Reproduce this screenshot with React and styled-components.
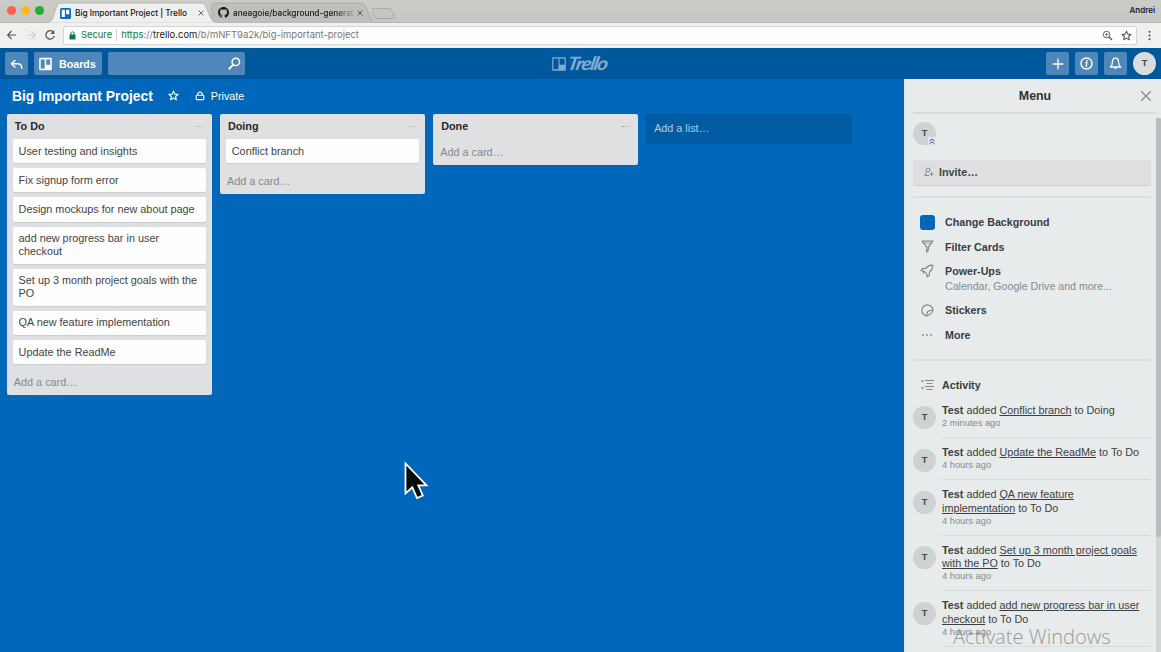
import React from "react";
import styled, { createGlobalStyle, css } from "styled-components";

const Global = createGlobalStyle`
  * { box-sizing: border-box; }
  body { margin: 0; overflow: hidden; background: #0067ba; }
`;

const sans = `"Liberation Sans", Arial, sans-serif`;
const system = `Inter, Roboto, sans-serif`;

const Page = styled.div`
  width: 1161px;
  height: 652px;
  display: flex;
  flex-direction: column;
  overflow: hidden;
  background: #0067ba;
  font-family: ${sans};
  color: #3f4243;
`;

/* ---------- browser frame ---------- */

const TabStrip = styled.div`
  height: 23px;
  flex: none;
  display: flex;
  align-items: flex-start;
  background: linear-gradient(#cbcbc7, #c6c6c3);
  border-bottom: 1px solid #b3b3b0;
  font-family: ${system};
  position: relative;
`;

const Lights = styled.div`
  display: flex;
  gap: 5px;
  padding: 6px 0 0 7px;
  width: 49px;
`;

const Light = styled.i`
  width: 9px;
  height: 9px;
  border-radius: 50%;
  background: ${(p) => p.$color};
`;

const Tab = styled.div`
  position: relative;
  z-index: ${(p) => (p.$active ? 2 : 1)};
  width: ${(p) => p.$width}px;
  height: ${(p) => (p.$active ? 21 : 20)}px;
  margin: 2px ${(p) => (p.$active ? -6 : 0)}px 0 0;
  display: flex;
  align-items: center;
  padding: ${(p) => (p.$active ? "1px 12px 0 11px" : "1px 9px 0 8px")};
  color: #151515;
`;

const TabShape = styled.svg`
  position: absolute;
  inset: 0;
  z-index: -1;
`;

const TabIcon = styled.svg`
  flex: none;
  margin-right: 4px;
`;

const TabTitle = styled.span`
  font-size: 8.3px;
  line-height: 14px;
  font-weight: 500;
  letter-spacing: -0.03px;
  white-space: nowrap;
  ${(p) => p.$fade && css`mask-image: linear-gradient(90deg, #000 84%, rgba(0, 0, 0, 0.15));`}
`;

const TabClose = styled.svg`
  margin-left: auto;
  flex: none;
`;

const Profile = styled.span`
  margin: 4px 6px 0 auto;
  font-size: 8px;
  line-height: 13px;
  font-weight: 600;
  color: #1d1d1d;
`;

const Toolbar = styled.div`
  height: 25px;
  flex: none;
  display: flex;
  align-items: center;
  background: #f0f0ef;
  padding: 0 7px 1px 6px;
  font-family: ${system};
`;

const NavIcons = styled.div`
  display: flex;
  gap: 7px;
  width: 57px;
`;

const Address = styled.div`
  flex: 1;
  height: 19px;
  display: flex;
  align-items: center;
  background: #fefefe;
  border: 1px solid #d4d4d4;
  border-radius: 2px;
  padding: 0 4px 0 5px;
  margin-right: 8px;
`;

const Secure = styled.span`
  margin-left: 5px;
  padding-right: 4px;
  font-size: 9.45px;
  line-height: 12px;
  color: #0b7a3c;
  border-right: 1px solid #d0d0d0;
  letter-spacing: -0.05px;
`;

const Url = styled.span`
  flex: 1;
  margin-left: 4px;
  font-size: 9.46px;
  line-height: 12px;
  color: #767676;
  white-space: nowrap;
  b { font-weight: 400; color: #0b7a3c; }
  em { font-style: normal; color: #1b1b1b; }
`;

const AddressIcons = styled.div`
  display: flex;
  gap: 8px;
`;

/* ---------- application header ---------- */

const Header = styled.header`
  height: 31px;
  flex: none;
  display: grid;
  grid-template-columns: 1fr 58px 1fr;
  align-items: center;
  background: #00589c;
  padding: 0 5px;
`;

const HeaderGroup = styled.div`
  display: flex;
  align-items: center;
  gap: 6px;
  justify-content: ${(p) => (p.$end ? "flex-end" : "flex-start")};
`;

const HeaderButton = styled.button`
  width: ${(p) => p.$width || 23}px;
  height: 23px;
  border: 0;
  border-radius: 2px;
  padding: 0;
  background: #4f87ba;
  color: #fff;
  display: flex;
  align-items: center;
  justify-content: ${(p) => p.$justify || "center"};
  font: bold 10.7px/14px ${sans};
`;

const BoardsLabel = styled.span`
  margin-left: 7px;
`;

const Search = styled(HeaderButton).attrs({ as: "div" })`
  justify-content: flex-end;
  padding-right: 4px;
`;

const Logo = styled.div`
  display: flex;
  align-items: center;
  gap: 2px;
  color: #84abd0;
`;

const LogoWord = styled.span`
  font: italic 700 18.5px/20px Lato, ${sans};
  letter-spacing: -1.3px;
  transform: translateY(-1px) scaleX(1.12) skewX(-10deg);
  transform-origin: left center;
`;

const Avatar = styled.span`
  flex: none;
  width: 23px;
  height: 23px;
  border-radius: 50%;
  background: ${(p) => (p.$light ? "#dadcde" : "#cfd2d3")};
  color: #45494b;
  font: bold 9.2px/23px ${sans};
  text-align: center;
  position: relative;
`;

/* ---------- board ---------- */

const Body = styled.main`
  flex: 1;
  min-height: 0;
  display: flex;
`;

const Board = styled.section`
  flex: 1;
  padding: 0 0 0 6.6px;
`;

const BoardHeader = styled.div`
  height: 35px;
  display: flex;
  align-items: center;
  padding: 0 0 1.5px 5.4px;
  color: #fff;
`;

const BoardTitle = styled.h1`
  margin: 0 15px 0 0;
  font-size: 13.85px;
  line-height: 18px;
`;

const Privacy = styled.span`
  display: flex;
  align-items: center;
  gap: 6px;
  margin-left: 16px;
  font-size: 10.8px;
`;

const Lists = styled.div`
  display: flex;
  align-items: flex-start;
  gap: 7.7px;
`;

const List = styled.section`
  width: 205.5px;
  background: #dfe0e2;
  border-radius: 2px;
  padding: 0 6px;
`;

const ListHeader = styled.div`
  height: 25.3px;
  display: flex;
  align-items: center;
  justify-content: space-between;
  padding: 0 3px 0.4px 2.2px;
  h2 {
    margin: 0;
    font-size: 10.8px;
    line-height: 14px;
    color: #28292a;
  }
`;

const Dots = styled.span`
  display: flex;
  gap: ${(p) => p.$gap || 1.4}px;
  i {
    width: ${(p) => p.$size || 1.6}px;
    height: ${(p) => p.$size || 1.6}px;
    border-radius: 50%;
    background: #8d9194;
  }
`;

const Card = styled.div`
  margin-bottom: 5px;
  padding: 5.4px 5px 5.5px 6px;
  background: #fefefe;
  border-radius: 2px;
  box-shadow: 0 1px 1px #c9cbcd;
  font-size: 10.85px;
  line-height: 13.18px;
  color: #444;
`;

const AddCard = styled.div`
  height: 25.6px;
  padding-left: 1.2px;
  font-size: 10.85px;
  line-height: 27px;
  color: #84898c;
`;

const AddList = styled.div`
  width: 205.5px;
  height: 29.5px;
  border-radius: 2px;
  background: #005ba3;
  padding-left: 8px;
  font-size: 10.8px;
  line-height: 29.5px;
  color: #b4cce3;
`;

/* ---------- menu ---------- */

const Menu = styled.aside`
  width: 257px;
  background: #e8ebec;
  border-left: 1px solid #dfe5ea;
  padding-left: 8px;
`;

const MenuHeader = styled.div`
  height: 35px;
  display: flex;
  align-items: center;
  border-bottom: 2px solid #d9dbdd;
  margin-right: 4px;
  padding-right: 5px;
  h3 {
    flex: 1;
    margin: 0 0 0 17px;
    text-align: center;
    font-size: 12.4px;
    color: #303233;
  }
`;

const MenuBody = styled.div`
  display: flex;
  height: 538px;
`;

const MenuContent = styled.div`
  width: 238px;
  padding-top: 8.4px;
`;

const Track = styled.div`
  width: 5px;
  margin: 4px 0 0 5px;
  background: #d2d5d6;
`;

const Thumb = styled.div`
  height: 419px;
  background: #b8bdbf;
  border-radius: 2px 2px 3px 3px;
`;

const AdminMark = styled.svg`
  position: absolute;
  right: 0;
  bottom: 0;
`;

const Invite = styled.button`
  display: flex;
  align-items: center;
  width: 100%;
  height: 26px;
  margin: 14.4px 0 10px;
  padding: 0 11px 1px;
  gap: 5px;
  border: 0;
  border-bottom: 1px solid #cfd0d2;
  border-radius: 2px;
  background: #dfdfe1;
  color: #414445;
  font: bold 10.8px/14px ${sans};
`;

const Rule = styled.hr`
  height: 2px;
  border: 0;
  margin: 0;
  background: #dcdfe0;
`;

const Actions = styled.nav`
  padding: 12px 0 11.8px 6px;
`;

const Action = styled.div`
  display: flex;
  align-items: ${(p) => (p.$tall ? "flex-start" : "center")};
  height: ${(p) => (p.$tall ? 39 : 24.6)}px;
  ${(p) => p.$tall && css`padding-top: 5px;`}
`;

const ActionIcon = styled.span`
  width: 16px;
  height: 15px;
  margin-right: 10px;
  flex: none;
  display: flex;
  align-items: center;
  justify-content: center;
  color: #85898c;
`;

const Swatch = styled.i`
  width: 15px;
  height: 15px;
  border-radius: 3px;
  background: #0067ba;
`;

const ActionText = styled.div`
  font-size: 10.7px;
  line-height: 14px;
  font-weight: bold;
  color: #3a3d3e;
  small {
    display: block;
    font-size: 10.62px;
    line-height: 16px;
    font-weight: normal;
    color: #848a8d;
  }
`;

const ActivityTitle = styled.div`
  display: flex;
  align-items: center;
  padding: 16.6px 0 4.2px 8px;
  gap: 7px;
  font-size: 10.7px;
  line-height: 14px;
  font-weight: bold;
  color: #3a3d3e;
`;

const Entry = styled.article`
  display: flex;
  gap: 6px;
  > ${Avatar} { margin-top: 10.5px; }
`;

const EntryText = styled.div`
  flex: 1;
  padding: 8.2px 0 7.1px;
  border-bottom: 1px solid #dadddf;
  font-size: 10.8px;
  line-height: 13.2px;
  color: #3d4041;
  white-space: pre-line;
  u { text-underline-offset: 1px; }
  time {
    display: block;
    font-size: 9.3px;
    line-height: 12.8px;
    color: #84898c;
  }
`;

/* ---------- overlays ---------- */

const Watermark = styled.div`
  position: absolute;
  left: 953px;
  top: 623px;
  font: 300 20.1px/28px "Open Sans", "Noto Sans", sans-serif;
  color: rgba(135, 139, 141, 0.85);
  white-space: nowrap;
`;

const Pointer = styled.svg`
  position: absolute;
  left: 403px;
  top: 460px;
`;

/* ---------- icons ---------- */

const BoardIcon = ({ size = 14, color = "#fff", hole = "#4f87ba" }) => (
  <svg width={size} height={size} viewBox="0 0 14 14">
    <rect x=".2" y=".3" width="13.6" height="13.4" rx="1" fill={color} />
    <rect x="1.400" y="1.600" width="5" height="10.600" fill={hole} />
    <rect x="7.600" y="1.600" width="5" height="6.200" fill={hole} />
  </svg>
);

const Cross = ({ size, color, width = 1 }) => (
  <svg width={size} height={size} viewBox="0 0 10 10" stroke={color} strokeWidth={width}>
    <path d="M1 1 9 9M9 1 1 9" />
  </svg>
);

const Star = ({ size, color, width = 1.2 }) => (
  <svg width={size} height={size} viewBox="0 0 12 12" fill="none" stroke={color} strokeWidth={width} strokeLinejoin="round">
    <path d="M6 1.2 7.4 4.5 11 4.8 8.3 7.1 9.1 10.7 6 8.8 2.9 10.7 3.7 7.1 1 4.8 4.6 4.5Z" />
  </svg>
);

const GithubPath =
  "M8 0C3.58 0 0 3.58 0 8c0 3.54 2.29 6.53 5.47 7.59.4.07.55-.17.55-.38 0-.19-.01-.82-.01-1.49-2.01.37-2.53-.49-2.69-.94-.09-.23-.48-.94-.82-1.13-.28-.15-.68-.52-.01-.53.63-.01 1.08.58 1.23.82.72 1.21 1.87.87 2.33.66.07-.52.28-.87.51-1.07-1.78-.2-3.64-.89-3.64-3.95 0-.87.31-1.59.82-2.15-.08-.2-.36-1.02.08-2.12 0 0 .67-.21 2.2.82.64-.18 1.32-.27 2-.27s1.36.09 2 .27c1.53-1.04 2.2-.82 2.2-.82.44 1.1.16 1.92.08 2.12.51.56.82 1.27.82 2.15 0 3.07-1.87 3.75-3.65 3.95.29.25.54.73.54 1.48 0 1.07-.01 1.93-.01 2.2 0 .21.15.46.55.38A8.01 8.01 0 0 0 16 8c0-4.42-3.58-8-8-8Z";

/* ---------- data ---------- */

const lists = [
  {
    name: "To Do",
    cards: [
      "User testing and insights",
      "Fix signup form error",
      "Design mockups for new about page",
      "add new progress bar in user checkout",
      "Set up 3 month project goals with the PO",
      "QA new feature implementation",
      "Update the ReadMe",
    ],
  },
  { name: "Doing", cards: ["Conflict branch"] },
  { name: "Done", cards: [] },
];

const activity = [
  ["Conflict branch", "Doing", "2 minutes ago"],
  ["Update the ReadMe", "To Do", "4 hours ago"],
  ["QA new feature\nimplementation", "To Do", "4 hours ago"],
  ["Set up 3 month project goals\nwith the PO", "To Do", "4 hours ago"],
  ["add new progress bar in user\ncheckout", "To Do", "4 hours ago"],
];

const Ellipsis = ({ gap, size }) => (
  <Dots $gap={gap} $size={size}>
    <i /><i /><i />
  </Dots>
);

function Browser() {
  return (
    <>
      <TabStrip>
        <Lights>
          <Light $color="#fc6150" />
          <Light $color="#fdb924" />
          <Light $color="#1fad33" />
        </Lights>
        <Tab $active $width={167}>
          <TabShape width="167" height="21">
            <path d="M0 20.5C3 19 3.5 16 5 12L8 3.500Q9 1 11 1H153Q155 1 156 3L161 14Q163.500 20 166 20.500" fill="#efefee" stroke="#adadaa" strokeWidth=".8" />
            <path d="M0 21H167" stroke="#efefee" />
          </TabShape>
          <TabIcon width="11" height="11" viewBox="0 0 14 14">
            <rect width="14" height="14" rx="2" fill="#0b6fc2" />
            <rect x="2.2" y="2.2" width="4" height="9.400" rx=".5" fill="#fff" />
            <rect x="7.800" y="2.200" width="4" height="5.600" rx=".5" fill="#fff" />
          </TabIcon>
          <TabTitle>Big Important Project | Trello</TabTitle>
          <TabClose width="6" height="6" viewBox="0 0 10 10" stroke="#555" strokeWidth="1.5">
            <path d="M1 1 9 9M9 1 1 9" />
          </TabClose>
        </Tab>
        <Tab $width={162}>
          <TabShape width="162" height="21">
            <path d="M0 20.5 3 12 1 4Q2 1 5 1H151Q154 1 155 3L160.500 16 162 20.500" fill="#bfbfbc" stroke="#a6a6a3" strokeWidth=".8" />
          </TabShape>
          <TabIcon width="11" height="11" viewBox="0 0 16 16">
            <path d={GithubPath} fill="#1c1c1c" />
          </TabIcon>
          <TabTitle $fade>aneagoie/background-generat</TabTitle>
          <TabClose width="6" height="6" viewBox="0 0 10 10" stroke="#444" strokeWidth="1.5">
            <path d="M1 1 9 9M9 1 1 9" />
          </TabClose>
        </Tab>
        <svg width="26" height="22" viewBox="2 0 26 22">
          <path d="M1.500 8.500H19Q21 8.500 21.500 10L24.500 17Q24.800 18.500 23.500 18.500H7Q5.500 18.500 4.800 17L1 10Q.5 8.500 1.500 8.500Z" fill="#c5c5c2" stroke="#a5a5a2" strokeWidth=".8" />
        </svg>
        <Profile>Andrei</Profile>
      </TabStrip>
      <Toolbar>
        <NavIcons>
          <svg width="12" height="12" viewBox="0 0 12 12" fill="none" stroke="#505050" strokeWidth="1.1">
            <path d="M10 6H1.800M5.600 2 1.600 6 5.600 10" />
          </svg>
          <svg width="12" height="12" viewBox="0 0 12 12" fill="none" stroke="#cfcfcf" strokeWidth="1.1">
            <path d="M2 6H10.200M6.400 2 10.400 6 6.400 10" />
          </svg>
          <svg width="12" height="12" viewBox="0 0 12 12" fill="none" stroke="#505050" strokeWidth="1.2">
            <path d="M9.300 3.100A4.200 4.200 0 1 0 10.200 7" />
            <path d="M10.300 1V4.900H6.400Z" fill="#505050" stroke="none" />
          </svg>
        </NavIcons>
        <Address>
          <svg width="7" height="9" viewBox="0 0 7 9">
            <rect x=".5" y="3.500" width="6" height="5" rx=".6" fill="#0b7a3c" />
            <path d="M1.800 4V2.600a1.700 1.700 0 0 1 3.400 0V4" fill="none" stroke="#0b7a3c" />
          </svg>
          <Secure>Secure</Secure>
          <Url>
            <b>https</b>://<em>trello.com</em>/b/mNFT9a2k/big-important-project
          </Url>
          <AddressIcons>
            <svg width="11" height="11" viewBox="0 0 11 11" fill="none" stroke="#5d5d5d">
              <circle cx="4.600" cy="4.600" r="3.300" />
              <path d="M7.100 7.100 10 10" strokeWidth="1.400" />
              <path d="M3 4.600H6.200M4.600 3V6.200" strokeWidth=".8" />
            </svg>
            <Star size={11} color="#505050" width={1.1} />
          </AddressIcons>
        </Address>
        <svg width="9" height="11" viewBox="0 0 9 11" fill="#505050">
          <circle cx="4.500" cy="1.800" r="1" />
          <circle cx="4.500" cy="5.500" r="1" />
          <circle cx="4.500" cy="9.200" r="1" />
        </svg>
      </Toolbar>
    </>
  );
}

function AppHeader() {
  return (
    <Header>
      <HeaderGroup>
        <HeaderButton>
          <svg width="13" height="13" viewBox="0 0 13 13" fill="none" stroke="#fff" strokeWidth="1.400" strokeLinecap="round" strokeLinejoin="round">
            <path d="M5 3.500 1.300 6.800 5 10.100M1.600 6.800H7.500Q11.800 6.800 11.800 11.300" />
          </svg>
        </HeaderButton>
        <HeaderButton $width={68} $justify="flex-start">
          <svg width="18" height="14" viewBox="0 0 18 14">
            <rect x="5.200" y=".8" width="12.600" height="12.400" rx="1.200" fill="#fff" />
            <rect x="6.700" y="2.400" width="4" height="9.200" fill="#4f87ba" />
            <rect x="12.200" y="2.400" width="4" height="5.400" fill="#4f87ba" />
          </svg>
          <BoardsLabel>Boards</BoardsLabel>
        </HeaderButton>
        <Search $width={137}>
          <svg width="13" height="13" viewBox="0 0 13 13" fill="none" stroke="#fff" strokeWidth="1.500">
            <circle cx="7.800" cy="4.900" r="3.700" />
            <path d="M5.200 7.600 1.300 11.600" strokeWidth="2" strokeLinecap="round" />
          </svg>
        </Search>
      </HeaderGroup>
      <Logo>
        <BoardIcon size={14} color="#84abd0" hole="#00589c" />
        <LogoWord>Trello</LogoWord>
      </Logo>
      <HeaderGroup $end>
        <HeaderButton>
          <svg width="12" height="12" viewBox="0 0 12 12" stroke="#fff" strokeWidth="1.300" strokeLinecap="round">
            <path d="M6 1.200V10.800M1.200 6H10.800" />
          </svg>
        </HeaderButton>
        <HeaderButton>
          <svg width="13" height="13" viewBox="0 0 13 13" fill="none" stroke="#fff">
            <circle cx="6.500" cy="6.500" r="5.500" strokeWidth="1.400" />
            <path d="M5.300 5.700H6.900L6.100 9.200H7.300" strokeWidth="1.200" />
            <circle cx="7" cy="3.800" r=".9" fill="#fff" stroke="none" />
          </svg>
        </HeaderButton>
        <HeaderButton>
          <svg width="13" height="13" viewBox="0 0 13 13" fill="none" stroke="#fff" strokeWidth="1.300" strokeLinejoin="round">
            <path d="M1.200 10Q3.400 8.600 3.400 5.600 3.400 1.200 6.500 1.200T9.600 5.600Q9.600 8.600 11.800 10Z" />
            <path d="M5 10.500Q6.500 13.500 8 10.500Z" fill="#fff" stroke="none" />
          </svg>
        </HeaderButton>
        <Avatar $light>T</Avatar>
      </HeaderGroup>
    </Header>
  );
}

function SideMenu() {
  return (
    <Menu>
      <MenuHeader>
        <h3>Menu</h3>
        <Cross size={12} color="#888b8d" width={1.1} />
      </MenuHeader>
      <MenuBody>
        <MenuContent>
          <Avatar as="div">
            T
            <AdminMark width="8" height="8" viewBox="0 0 8 8" fill="none" stroke="#4b50b8">
              <rect width="8" height="8" fill="#e2e5ee" stroke="none" />
              <path d="M1.500 4 4 2 6.500 4M1.500 6.800 4 4.800 6.500 6.800" />
            </AdminMark>
          </Avatar>
          <Invite>
            <svg width="10" height="10" viewBox="0 0 10 10" fill="none" stroke="#85888a">
              <circle cx="4" cy="3" r="2" />
              <path d="M3.200 5.200Q.8 6 .8 8.500H5M7.500 5V9.200M5.500 7.100H9.600" />
            </svg>
            Invite…
          </Invite>
          <Rule />
          <Actions>
            <Action>
              <ActionIcon><Swatch /></ActionIcon>
              <ActionText>Change Background</ActionText>
            </Action>
            <Action>
              <ActionIcon>
                <svg width="13" height="13" viewBox="0 0 13 13" fill="none" stroke="currentColor" strokeWidth="1.200" strokeLinejoin="round">
                  <path d="M1 1.200H12L7.300 7V10.500L5.700 12V7Z" />
                  <path d="M3 3.200H10" strokeWidth=".8" />
                </svg>
              </ActionIcon>
              <ActionText>Filter Cards</ActionText>
            </Action>
            <Action $tall>
              <ActionIcon>
                <svg width="14" height="14" viewBox="0 0 14 14" fill="none" stroke="currentColor" strokeWidth="1.200" strokeLinejoin="round">
                  <path d="M12.600 1.200Q8.500 1 5.800 4.400L2.500 4.700 1 6.600 4.300 7.300 6.600 9.700 7.200 12.800 9.200 11.400 9.500 8.100Q12.800 5.500 12.600 1.200Z" />
                  <path d="M4.200 7.500 3 9.600" />
                </svg>
              </ActionIcon>
              <ActionText>
                Power-Ups
                <small>Calendar, Google Drive and more...</small>
              </ActionText>
            </Action>
            <Action>
              <ActionIcon>
                <svg width="13" height="13" viewBox="0 0 13 13" fill="none" stroke="currentColor" strokeWidth="1.200" strokeLinejoin="round">
                  <path d="M6 12A5.600 5.600 0 1 1 12 6Q11.500 9.500 6 12ZM5.800 11.800Q4.900 6.200 12 6" />
                </svg>
              </ActionIcon>
              <ActionText>Stickers</ActionText>
            </Action>
            <Action>
              <ActionIcon><Ellipsis gap={2.2} size={2} /></ActionIcon>
              <ActionText>More</ActionText>
            </Action>
          </Actions>
          <Rule />
          <ActivityTitle>
            <svg width="14" height="12" viewBox="0 0 14 12" stroke="#85898c" strokeWidth="1.200">
              <path d="M4 1.500H13M5.500 4.500H11.500M4 7.500H13M5.500 10.500H11.500M.5 2.200H2.500M.5 9H2.500M1.500 1.200V3.200M1.500 8V10" />
            </svg>
            Activity
          </ActivityTitle>
          {activity.map(([card, list, time]) => (
            <Entry key={card}>
              <Avatar>T</Avatar>
              <EntryText>
                <b>Test</b> added <u>{card}</u> to {list}
                <time>{time}</time>
              </EntryText>
            </Entry>
          ))}
        </MenuContent>
        <Track>
          <Thumb />
        </Track>
      </MenuBody>
    </Menu>
  );
}

export default function App() {
  return (
    <Page>
      <Global />
      <Browser />
      <AppHeader />
      <Body>
        <Board>
          <BoardHeader>
            <BoardTitle>Big Important Project</BoardTitle>
            <Star size={11} color="#fff" width={1.2} />
            <Privacy>
              <svg width="10" height="10" viewBox="0 0 10 10" fill="none" stroke="#fff" strokeWidth="1.100">
                <rect x="1.200" y="4.300" width="7.600" height="4.300" rx=".6" />
                <path d="M2.800 4.300V3.200a2.200 2.200 0 0 1 4.400 0V4.300" />
              </svg>
              Private
            </Privacy>
          </BoardHeader>
          <Lists>
            {lists.map((list) => (
              <List key={list.name}>
                <ListHeader>
                  <h2>{list.name}</h2>
                  <Ellipsis />
                </ListHeader>
                {list.cards.map((card) => (
                  <Card key={card}>{card}</Card>
                ))}
                <AddCard>Add a card…</AddCard>
              </List>
            ))}
            <AddList>Add a list…</AddList>
          </Lists>
        </Board>
        <SideMenu />
      </Body>
      <Watermark>Activate Windows</Watermark>
      <Pointer width="28" height="42" viewBox="0 0 28 42">
        <path d="M2.500 3.500V33.500L9.300 27.300 14 38 19.800 35.500 15.300 25.300H23.500Z" fill="#0a0a0a" stroke="#fff" strokeWidth="1.800" />
      </Pointer>
    </Page>
  );
}
